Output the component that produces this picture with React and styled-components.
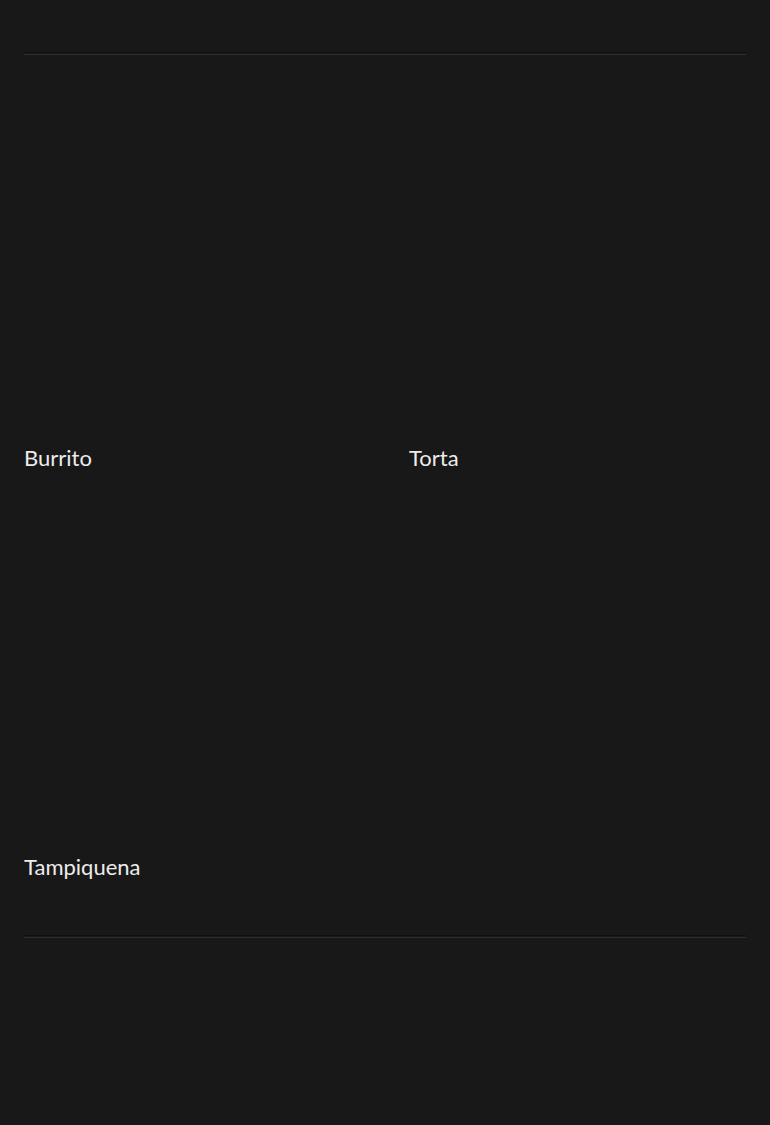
import React from "react";
import styled, { createGlobalStyle } from "styled-components";

const GlobalStyle = createGlobalStyle`
  html, body {
    margin: 0;
    padding: 0;
    background: #181818;
  }
  body {
    font-family: Lato, "Noto Sans", sans-serif;
    color: #ececec;
  }
`;

const Page = styled.div`
  min-height: 1125px;
  background: #181818;
`;

const Header = styled.div`
  height: 52px;
`;

const Divider = styled.div`
  margin: 0 24px;
  height: 1px;
  border-top: 1px solid #101010;
  border-bottom: 1px solid #2e2e2e;
`;

const Grid = styled.div`
  display: grid;
  grid-template-columns: 1fr 1fr;
  row-gap: 24px;
  padding: 34px 0 52px;
`;

const Card = styled.div`
  padding: 0 24px;
  display: flex;
  flex-direction: column;
`;

// 사진 자리 (이미지가 로드되지 않은 빈 영역)
const Photo = styled.div`
  height: 337px;
  margin-bottom: 16px;
  background: transparent;
`;

const Title = styled.h3`
  margin: 0;
  font-size: 22px;
  font-weight: 400;
  line-height: 32px;
  letter-spacing: 0;
`;

const items = ["Burrito", "Torta", "Tampiquena"];

const App = () => {
  return (
    <Page>
      <GlobalStyle />
      <Header />
      <Divider />
      <Grid>
        {items.map((name) => (
          <Card key={name}>
            <Photo />
            <Title>{name}</Title>
          </Card>
        ))}
      </Grid>
      <Divider />
    </Page>
  );
};

export default App;
